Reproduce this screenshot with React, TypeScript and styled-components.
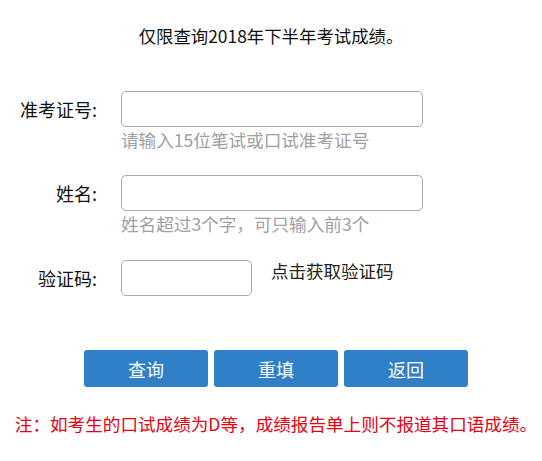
import React, { useState } from "react"
import styled, { createGlobalStyle } from "styled-components"

const GlobalStyle = createGlobalStyle`
  html, body {
    margin: 0;
    padding: 0;
    background: #fff;
  }
  body {
    font-family: "Microsoft YaHei", "Noto Sans CJK SC", "Noto Sans", sans-serif;
    color: #000;
  }
`

const Page = styled.div`
  width: 542px;
  padding-top: 24px;
`

const Title = styled.p`
  margin: 0;
  text-align: center;
  font-size: 17.4px;
  line-height: 24px;
  color: #111;
`

const Form = styled.form`
  margin-top: 43px;
  display: flex;
  flex-direction: column;
`

const Row = styled.div<{ $gap: number }>`
  display: grid;
  grid-template-columns: 97px 1fr;
  column-gap: 24px;
  margin-bottom: ${(p) => p.$gap}px;
`

const Label = styled.label`
  text-align: right;
  font-size: 18px;
  line-height: 36px;
  color: #111;
  white-space: nowrap;
`

const Field = styled.div`
  display: flex;
  flex-direction: column;
`

const Input = styled.input<{ $width: number }>`
  box-sizing: border-box;
  width: ${(p) => p.$width}px;
  height: 36px;
  border: 1px solid #aaa;
  border-radius: 5px;
  padding: 0 8px;
  font-size: 16px;
  outline: none;
  &:focus {
    border-color: #2f80c6;
  }
`

const Hint = styled.span`
  font-size: 17.6px;
  line-height: 26px;
  color: #a0a0a0;
  white-space: nowrap;
`

const CaptchaLine = styled.div`
  display: flex;
  align-items: flex-start;
  gap: 19px;
`

const CaptchaLink = styled.span`
  font-size: 17.5px;
  line-height: 22px;
  color: #222;
  cursor: pointer;
  white-space: nowrap;
`

const Buttons = styled.div`
  display: flex;
  justify-content: center;
  gap: 6px;
  margin-top: 54px;
  padding-left: 10px;
`

const Button = styled.button`
  width: 124px;
  height: 37px;
  border: none;
  border-radius: 3px;
  background: #2f80c6;
  color: #fff;
  font-family: inherit;
  font-size: 18px;
  cursor: pointer;
  &:hover {
    background: #2a73b3;
  }
`

const Note = styled.p`
  margin: 25px 0 0;
  padding-left: 10px;
  text-align: center;
  font-size: 17.6px;
  line-height: 24px;
  color: #e60012;
  white-space: nowrap;
`

export default function App() {
  const [ticket, setTicket] = useState("")
  const [name, setName] = useState("")
  const [code, setCode] = useState("")

  const onReset = () => {
    setTicket("")
    setName("")
    setCode("")
  }

  return (
    <Page>
      <GlobalStyle />
      <Title>仅限查询2018年下半年考试成绩。</Title>
      <Form onSubmit={(e) => e.preventDefault()}>
        <Row $gap={22}>
          <Label htmlFor="ticket">准考证号:</Label>
          <Field>
            <Input
              id="ticket"
              $width={302}
              maxLength={15}
              value={ticket}
              onChange={(e) => setTicket(e.target.value)}
            />
            <Hint>请输入15位笔试或口试准考证号</Hint>
          </Field>
        </Row>
        <Row $gap={23}>
          <Label htmlFor="name">姓名:</Label>
          <Field>
            <Input
              id="name"
              $width={302}
              value={name}
              onChange={(e) => setName(e.target.value)}
            />
            <Hint>姓名超过3个字，可只输入前3个</Hint>
          </Field>
        </Row>
        <Row $gap={0}>
          <Label htmlFor="code">验证码:</Label>
          <CaptchaLine>
            <Input
              id="code"
              $width={131}
              value={code}
              onChange={(e) => setCode(e.target.value)}
            />
            <CaptchaLink>点击获取验证码</CaptchaLink>
          </CaptchaLine>
        </Row>
        <Buttons>
          <Button type="submit">查询</Button>
          <Button type="button" onClick={onReset}>重填</Button>
          <Button type="button">返回</Button>
        </Buttons>
      </Form>
      <Note>注：如考生的口试成绩为D等，成绩报告单上则不报道其口语成绩。</Note>
    </Page>
  )
}
